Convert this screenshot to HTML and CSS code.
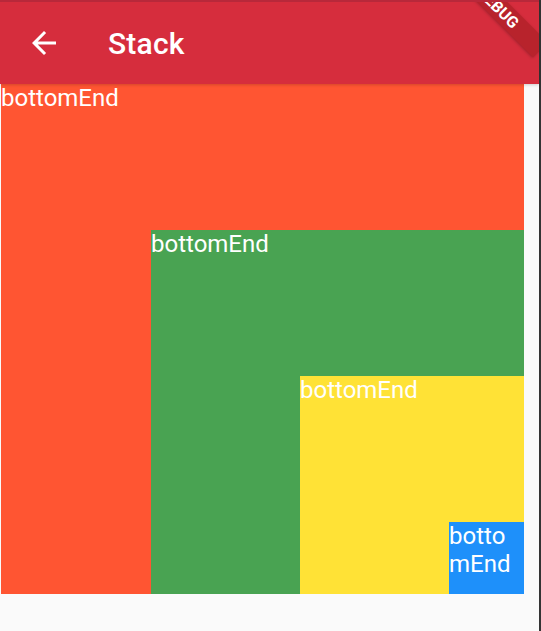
FILE: index.html
```html
<!DOCTYPE html>
<html lang="en">
<head>
<meta charset="utf-8">
<title>Stack</title>
<link rel="stylesheet" href="styles.css">
</head>
<body>
<div class="screen">
  <header class="appbar">
    <svg class="back" viewBox="0 0 24 24" width="36" height="36" aria-hidden="true">
      <path d="M20 11H7.83l5.59-5.59L12 4l-8 8 8 8 1.41-1.41L7.83 13H20v-2z" fill="#ffffff"/>
    </svg>
    <h1 class="title">Stack</h1>
    <div class="banner">DEBUG</div>
  </header>
  <main class="body">
    <div class="box box-orange">
      <span class="label">bottomEnd</span>
      <div class="box box-green">
        <span class="label">bottomEnd</span>
        <div class="box box-yellow">
          <span class="label">bottomEnd</span>
          <div class="box box-blue">
            <span class="label">bottomEnd</span>
          </div>
        </div>
      </div>
    </div>
  </main>
</div>
</body>
</html>
```

FILE: styles.css
```css
html, body {
  margin: 0;
  padding: 0;
  background: #fafafa;
}

.screen {
  width: 539px;
  height: 631px;
  border-right: 2px solid #343434;
  background: #fafafa;
  display: flex;
  flex-direction: column;
  font-family: Roboto, "Noto Sans", sans-serif;
}

.appbar {
  position: relative;
  z-index: 2;
  height: 82px;
  border-top: 2px solid #b8283a;
  background: #d62d3d;
  display: flex;
  align-items: center;
  padding-left: 26px;
  gap: 46px;
  overflow: hidden;
  box-shadow: 0 1px 3px rgba(0, 0, 0, 0.18);
  flex-shrink: 0;
}

.back {
  display: block;
  flex-shrink: 0;
}

.title {
  margin: 0;
  color: #ffffff;
  font-size: 30px;
  font-weight: 500;
  line-height: 35px;
  letter-spacing: 0.2px;
}

.banner {
  position: absolute;
  left: 438px;
  top: -5.5px;
  width: 120px;
  height: 21px;
  line-height: 21px;
  transform: rotate(45deg);
  background: #b8232c;
  color: #ffffff;
  font-size: 16px;
  font-weight: 700;
  text-align: center;
  box-shadow: 0 1px 3px rgba(0, 0, 0, 0.25);
}

.body {
  flex: 1;
  padding-left: 1px;
  display: flex;
  flex-direction: column;
  align-items: flex-start;
}

.box {
  display: grid;
  grid-template-columns: 100%;
  grid-template-rows: 100%;
  box-sizing: border-box;
}

.box > * {
  grid-area: 1 / 1;
}

.box > .box {
  align-self: end;
  justify-self: end;
}

.label {
  align-self: start;
  justify-self: start;
  color: #ffffff;
  font-size: 24px;
  line-height: 28px;
  word-break: break-all;
}

.box-orange {
  width: 523px;
  height: 510px;
  background: #ff5532;
}

.box-green {
  width: 373px;
  height: 364px;
  background: #49a352;
}

.box-yellow {
  width: 224px;
  height: 218px;
  background: #ffe236;
}

.box-blue {
  width: 75px;
  height: 72px;
  background: #1e90fa;
}
```
